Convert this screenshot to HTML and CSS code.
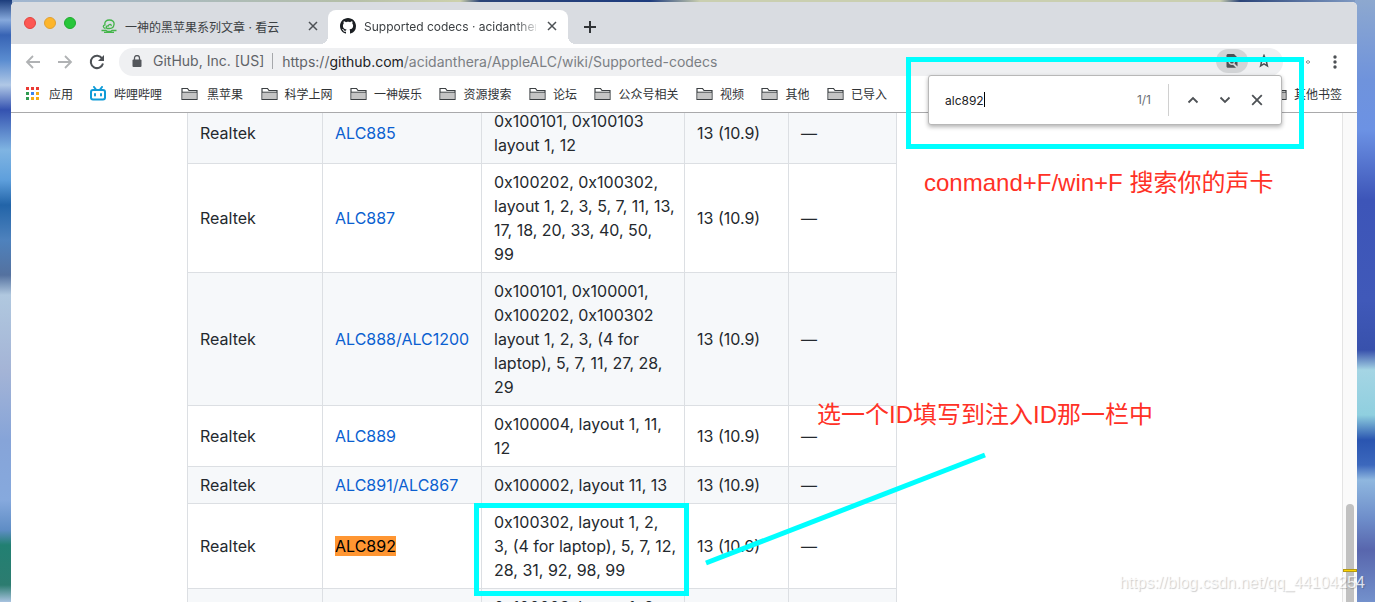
FILE: index.html
```html
<!DOCTYPE html>
<html lang="zh-CN">
<head>
<meta charset="utf-8">
<title>Supported codecs · acidanthera/AppleALC Wiki</title>
<link rel="stylesheet" href="styles.css">
</head>
<body>
<svg width="0" height="0" class="defs" aria-hidden="true">
  <symbol id="folder" viewBox="0 0 17 14">
    <path d="M1 12.5V1.5H6.5L8 3.5H16V12.5Z" fill="#fff" stroke="#3c4043" stroke-width="1.2"/>
    <path d="M1.6 5.5H15.4V12H1.6Z" fill="#c4c4c4"/>
    <path d="M1 5.2H16" stroke="#3c4043"/>
  </symbol>
  <symbol id="close" viewBox="0 0 10 10">
    <path d="M1 1L9 9M9 1L1 9" stroke="#4d5155" stroke-width="1.5" fill="none"/>
  </symbol>
</svg>
<div class="window">
  <header class="tabs">
    <div class="lights"><button class="light red" aria-label="关闭"></button><button class="light yellow" aria-label="最小化"></button><button class="light green" aria-label="缩放"></button></div>
    <div class="tab">
      <svg width="16" height="14" viewBox="0 0 16 14" fill="none" stroke="#43b549" stroke-width="1.3"><path d="M4.500 9.500C2 9.300 1.500 6.300 4 5.800C3.200 2.800 5.500 1 8.300 1C11.500 1 13.500 3 13 5.500C12.700 8 10.500 9.500 8.500 9.500H6C4.500 8.500 5.500 6.300 7.300 7C8 4.500 10.800 5 10 7M0.500 11.500H5L6.500 12.500H9.500L11 11.500H15.500M3 13.400H13"/></svg>
      <span class="tab-title">一神的黑苹果系列文章 · 看云</span>
      <button class="icon-button" aria-label="关闭标签页"><svg width="10" height="10"><use href="#close"/></svg></button>
    </div>
    <div class="tab active">
      <svg width="16" height="16" viewBox="0 0 16 16" fill="#1b1f23"><path d="M8 0C3.580 0 0 3.580 0 8c0 3.540 2.290 6.530 5.470 7.590.4.070.550-.170.550-.380 0-.190-.010-.820-.010-1.490-2.010.370-2.530-.490-2.690-.940-.090-.230-.480-.940-.820-1.130-.280-.150-.680-.520-.010-.530.630-.010 1.080.580 1.230.820.720 1.210 1.870.870 2.330.660.070-.520.280-.870.510-1.070-1.780-.2-3.640-.890-3.640-3.950 0-.870.310-1.590.820-2.150-.080-.2-.360-1.020.080-2.120 0 0 .670-.210 2.200.820.640-.180 1.320-.270 2-.270s1.360.090 2 .270c1.530-1.040 2.200-.820 2.200-.820.440 1.100.160 1.920.080 2.120.510.560.820 1.270.820 2.150 0 3.070-1.870 3.750-3.650 3.950.290.250.540.730.540 1.480 0 1.070-.010 1.930-.010 2.200 0 .210.150.460.550.380A8.010 8.010 0 0 0 16 8c0-4.420-3.580-8-8-8z"/></svg>
      <span class="tab-title">Supported codecs · acidanthera</span>
      <button class="icon-button" aria-label="关闭标签页"><svg width="10" height="10"><use href="#close"/></svg></button>
    </div>
    <button class="icon-button new-tab" aria-label="新标签页"><svg width="12" height="12" viewBox="0 0 12 12"><path d="M6 0V12M0 6H12" stroke="#303336" stroke-width="2"/></svg></button>
  </header>
  <div class="toolbar">
    <button class="icon-button" aria-label="后退"><svg width="16" height="14" viewBox="0 0 16 14" fill="none" stroke="#b0b2b4" stroke-width="1.8"><path d="M15 7H2M8 1L2 7L8 13"/></svg></button>
    <button class="icon-button" aria-label="前进"><svg width="16" height="14" viewBox="0 0 16 14" fill="none" stroke="#b0b2b4" stroke-width="1.8"><path d="M1 7H14M8 1L14 7L8 13"/></svg></button>
    <button class="icon-button" aria-label="重新加载"><svg width="16" height="16" viewBox="0 0 16 16"><path d="M13.200 4.500A6.200 6.200 0 1 0 14 9.500" fill="none" stroke="#4d5155" stroke-width="2"/><path d="M15 1V7H9Z" fill="#4d5155"/></svg></button>
    <div class="omnibox">
      <svg width="10" height="12" viewBox="0 0 10 12"><rect x="0.500" y="4.500" width="9" height="7.500" rx="1" fill="#54575c"/><path d="M2.500 5V3A2.500 2.500 0 0 1 7.500 3V5" fill="none" stroke="#54575c" stroke-width="1.300"/></svg>
      <span class="origin">GitHub, Inc. [US]</span>
      <span class="url"><span class="scheme">https://</span><b>github.com</b>/acidanthera/AppleALC/wiki/Supported-codecs</span>
      <button class="icon-button find-chip" aria-label="在页面中查找"><svg width="12" height="14" viewBox="0 0 12 14"><path d="M1.500 0H8L11.500 3.500V12.500L8.500 9.500A3.300 3.300 0 1 0 7 10.800L10 13.800H1.500A1.300 1.300 0 0 1 0.500 12.500V1Z" fill="#4d5155"/><circle cx="5.900" cy="7.700" r="1.900" fill="#4d5155"/></svg></button>
      <button class="icon-button" aria-label="收藏"><svg width="14" height="14" viewBox="0 0 14 14"><path d="M7 1.500L8.500 5.200L12.500 5.500L9.500 8.100L10.400 12L7 9.900L3.600 12L4.500 8.100L1.500 5.500L5.500 5.200Z" fill="none" stroke="#4d5155" stroke-width="1.500"/></svg></button>
    </div>
    <svg class="extension" width="14" height="8" viewBox="0 0 14 8" fill="none" stroke="#8b8b8b"><path d="M1 4H3"/><path d="M7 4L9 2.500L11 4L9 5.500Z"/></svg>
    <button class="icon-button menu" aria-label="菜单"><svg width="4" height="14" viewBox="0 0 4 14" fill="#4d5155"><circle cx="2" cy="2" r="1.700"/><circle cx="2" cy="7" r="1.700"/><circle cx="2" cy="12" r="1.700"/></svg></button>
  </div>
  <nav class="bookmarks">
    <a class="bookmark" href="#"><svg width="14" height="14" viewBox="0 0 14 14"><path d="M0 0h3v3H0zM5 0h3v3H5zM10 0h3v3h-3z" fill="#ea3a33"/><path d="M0 5h3v3H0zM0 10h3v3H0z" fill="#2f9b50"/><path d="M5 5h3v3H5z" fill="#3b83f0"/><path d="M5 10h3v3H5zM10 5h3v3h-3zM10 10h3v3h-3z" fill="#f5aa16"/></svg><span>应用</span></a>
    <a class="bookmark bili" href="#"><svg width="16" height="15" viewBox="0 0 16 15" fill="none" stroke="#0f9bd7" stroke-width="2" stroke-linecap="round"><rect x="1" y="4" width="14" height="9.500" rx="2"/><path d="M4 1L6 3.500M12 1L10 3.500M5 8V9.500M11 8V9.500"/></svg><span>哔哩哔哩</span></a>
    <div class="folders">
      <a class="bookmark" href="#"><svg width="17" height="14"><use href="#folder"/></svg><span>黑苹果</span></a>
      <a class="bookmark" href="#"><svg width="17" height="14"><use href="#folder"/></svg><span>科学上网</span></a>
      <a class="bookmark" href="#"><svg width="17" height="14"><use href="#folder"/></svg><span>一神娱乐</span></a>
      <a class="bookmark" href="#"><svg width="17" height="14"><use href="#folder"/></svg><span>资源搜索</span></a>
      <a class="bookmark" href="#"><svg width="17" height="14"><use href="#folder"/></svg><span>论坛</span></a>
      <a class="bookmark" href="#"><svg width="17" height="14"><use href="#folder"/></svg><span>公众号相关</span></a>
      <a class="bookmark" href="#"><svg width="17" height="14"><use href="#folder"/></svg><span>视频</span></a>
      <a class="bookmark" href="#"><svg width="17" height="14"><use href="#folder"/></svg><span>其他</span></a>
      <a class="bookmark" href="#"><svg width="17" height="14"><use href="#folder"/></svg><span>已导入</span></a>
    </div>
    <a class="bookmark others" href="#"><svg width="17" height="14"><use href="#folder"/></svg><span>其他书签</span></a>
  </nav>
  <div class="viewport">
    <main class="page">
      <table class="codecs">
        <colgroup><col class="c-vendor"><col class="c-codec"><col class="c-layout"><col class="c-kernel"><col class="c-max"></colgroup>
        <tbody>
          <tr><td>Realtek</td><td><a href="#">ALC885</a></td><td>0x100101, 0x100103<br>layout 1, 12</td><td>13 (10.9)</td><td>—</td></tr>
          <tr><td>Realtek</td><td><a href="#">ALC887</a></td><td>0x100202, 0x100302,<br>layout 1, 2, 3, 5, 7, 11, 13,<br>17, 18, 20, 33, 40, 50,<br>99</td><td>13 (10.9)</td><td>—</td></tr>
          <tr><td>Realtek</td><td><a href="#">ALC888/ALC1200</a></td><td>0x100101, 0x100001,<br>0x100202, 0x100302<br>layout 1, 2, 3, (4 for<br>laptop), 5, 7, 11, 27, 28,<br>29</td><td>13 (10.9)</td><td>—</td></tr>
          <tr><td>Realtek</td><td><a href="#">ALC889</a></td><td>0x100004, layout 1, 11,<br>12</td><td>13 (10.9)</td><td>—</td></tr>
          <tr><td>Realtek</td><td><a href="#">ALC891/ALC867</a></td><td>0x100002, layout 11, 13</td><td>13 (10.9)</td><td>—</td></tr>
          <tr><td>Realtek</td><td><a href="#"><mark>ALC892</mark></a></td><td>0x100302, layout 1, 2,<br>3, (4 for laptop), 5, 7, 12,<br>28, 31, 92, 98, 99</td><td>13 (10.9)</td><td>—</td></tr>
          <tr><td>&nbsp;</td><td></td><td>0x100003, layout 1, 2,<br>&nbsp;</td><td></td><td></td></tr>
        </tbody>
      </table>
    </main>
    <div class="scrollbar"><div class="thumb"></div><div class="match-tick"></div></div>
  </div>
  <form class="find-bar">
    <input class="find-input" type="text" value="alc892" aria-label="查找"><i class="caret"></i>
    <span class="count">1/1</span>
    <button type="button" class="icon-button" aria-label="上一个"><svg width="12" height="8" viewBox="0 0 12 8"><path d="M1.500 6.500L6 2L10.500 6.500" fill="none" stroke="#4d5155" stroke-width="1.800"/></svg></button>
    <button type="button" class="icon-button" aria-label="下一个"><svg width="12" height="8" viewBox="0 0 12 8"><path d="M1.500 1.500L6 6L10.500 1.500" fill="none" stroke="#4d5155" stroke-width="1.800"/></svg></button>
    <button type="button" class="icon-button" aria-label="关闭"><svg width="12" height="12"><use href="#close"/></svg></button>
  </form>
</div>
<div class="box box-find"></div>
<div class="box box-layout"></div>
<svg class="pointer" width="290" height="120" viewBox="0 0 290 120"><path d="M6 114L285 6" stroke="#0ff" stroke-width="5"/></svg>
<p class="note note-find">conmand+F/win+F 搜索你的声卡</p>
<p class="note note-layout">选一个ID填写到注入ID那一栏中</p>
<p class="watermark">https://blog.csdn.net/qq_44104254</p>
</body>
</html>
```

FILE: styles.css
```css
* { box-sizing: border-box; }

body {
  margin: 0;
  height: 100vh;
  padding: 2px 18px 0 11px;
  position: relative;
  overflow: hidden;
  font-family: Inter, "Noto Sans CJK SC", sans-serif;
  color: #24292e;
  background:
    linear-gradient(#8da8cf 0, #6f93dc 80px, #6c92e4 130px, #3d55b8 200px, #4059b9 300px, #3851ac 350px, #a5d5e4 370px, #8fcfdf 415px, #2a55b0 440px, #3c68bd 465px, #8fb7df 480px, #6d8cc9 520px, #5866ad 550px, #7391cc 602px) right / 20px 100% no-repeat,
    linear-gradient(#1c3d7c 0, #86a9dc 20px, #3763b4 35px, #5a8cd0 60px, #b0c8e6 85px, #3452b0 110px, #7fb4e2 150px, #5e9fdc 180px, #2264a8 205px, #4e82bd 240px, #54719f 275px, #b0c8df 295px, #a4b4d6 370px, #86a4d8 440px, #86a9dd 500px, #5f8dc5 530px, #228072 545px, #2c7c70 585px, #a9c3e0 602px) left / 12px 100% no-repeat,
    linear-gradient(90deg, #9fb5d2 0, #b5bfa8 350px, #cdd1ac 460px, #2b4478 480px, #1e3c7e 650px, #cacfb0 700px, #cacfb0 1220px, #2b4478 1240px, #8da8cf 1375px);
}

.defs, .box, .pointer, .note, .watermark { position: absolute; }

button, input { font: inherit; }
a { text-decoration: none; color: inherit; }
svg { flex: none; }

.window {
  height: 100%;
  position: relative;
  display: flex;
  flex-direction: column;
  border-radius: 5px 5px 0 0;
  overflow: hidden;
  background: #fff;
}

.icon-button {
  display: flex;
  align-items: center;
  justify-content: center;
  flex: none;
  width: 16px;
  height: 24px;
  padding: 0;
  border: 0;
  background: none;
}

/* Tab strip */
.tabs {
  display: flex;
  height: 42px;
  flex: none;
  padding-left: 13px;
  background: #d9dce1;
}
.lights { display: flex; gap: 8px; padding-top: 15px; width: 65px; }
.light { width: 12px; height: 12px; border-radius: 50%; padding: 0; border: 1px solid; }
.red { background: #fc5753; border-color: #e2443f; }
.yellow { background: #fdb52b; border-color: #e0a033; }
.green { background: #27c63a; border-color: #1fab2e; }
.tab {
  display: flex;
  align-items: center;
  gap: 8px;
  width: 240px;
  margin-top: 8px;
  padding: 0 8px 2px 12px;
  font-size: 12px;
  color: #3c4043;
}
.tab-title {
  flex: 1;
  overflow: hidden;
  white-space: nowrap;
}
.active {
  position: relative;
  margin-left: -1px;
  background: #fff;
  border-radius: 8px 8px 0 0;
}
.active .tab-title { mask-image: linear-gradient(90deg, #000 150px, transparent 178px); }
.active::before, .active::after {
  content: "";
  position: absolute;
  bottom: 0;
  width: 8px;
  height: 8px;
}
.active::before { left: -8px; background: radial-gradient(circle at 0 0, transparent 8px, #fff 8px); }
.active::after { right: -8px; background: radial-gradient(circle at 100% 0, transparent 8px, #fff 8px); }
.new-tab { margin: 13px 0 0 14px; }

/* Toolbar */
.toolbar {
  display: flex;
  align-items: center;
  gap: 16px;
  height: 36px;
  flex: none;
  padding: 0 16px 0 14px;
}
.omnibox {
  flex: 1;
  display: flex;
  align-items: center;
  height: 28px;
  padding: 0 11px 2px 13px;
  margin-left: -2px;
  border-radius: 14px;
  background: #eff0f2;
  font-size: 14px;
  white-space: nowrap;
}
.origin {
  margin-left: 11px;
  padding-right: 8px;
  border-right: 1px solid #a6a8ab;
  line-height: 16px;
  color: #5f6368;
}
.url { flex: 1; margin-left: 9px; color: #7b7f84; }
.scheme { color: #5f6368; }
.url b { font-weight: 400; color: #202124; }
.find-chip { width: 32px; border-radius: 12px; background: #d2d4d6; margin-right: 8px; }
.menu { width: 12px; }

/* Bookmarks bar */
.bookmarks {
  display: flex;
  align-items: center;
  height: 33px;
  flex: none;
  padding: 0 15px 5px;
  border-bottom: 1px solid #a9a9ab;
  font-size: 12px;
  color: #303336;
}
.bookmark { display: flex; align-items: center; gap: 7px; white-space: nowrap; }
.bookmark:first-child { gap: 9px; }
.bili { margin-left: 17px; gap: 8px; }
.folders {
  display: flex;
  justify-content: space-between;
  width: 706px;
  margin-left: 19px;
}
.others { margin-left: auto; }

/* Page */
.viewport { flex: 1; min-height: 0; display: flex; }
.page { flex: 1; overflow: hidden; padding-left: 176px; }
.codecs {
  width: 710px;
  margin-top: -11px;
  table-layout: fixed;
  border-collapse: collapse;
  font-size: 16px;
  line-height: 24px;
}
.c-vendor { width: 135px; }
.c-codec { width: 159px; }
.c-layout { width: 203px; }
.c-kernel { width: 104px; }
.codecs td { padding: 6px 12px; border: 1px solid #dcdfe3; white-space: nowrap; }
.codecs tr:nth-child(odd) { background: #f6f8fa; }
.codecs a { color: #0b5fd0; }
mark { background: #ff9632; color: #000; }

.scrollbar {
  position: relative;
  width: 15px;
  border-left: 1px solid #e4e4e4;
  background: #fafafa;
}
.thumb {
  position: absolute;
  top: 391px;
  bottom: -10px;
  left: 3px;
  width: 8px;
  border-radius: 4px;
  background: #c1c1c1;
}
.match-tick {
  position: absolute;
  top: 456px;
  left: 0;
  right: 0;
  height: 3px;
  background: #ffd500;
  border: 1px solid #b59a13;
}

/* Find bar */
.find-bar {
  position: absolute;
  top: 73px;
  right: 75px;
  display: flex;
  align-items: center;
  gap: 16px;
  width: 354px;
  height: 50px;
  padding: 0 16px;
  background: #fff;
  border: 1px solid #b8b8b8;
  border-radius: 3px;
  box-shadow: 0 2px 4px rgba(0, 0, 0, .3);
  font-size: 12px;
}
.find-input { flex: 1; min-width: 0; padding: 0; border: 0; outline: 0; color: #202124; }
.caret { position: absolute; left: 55px; top: 16px; width: 1px; height: 15px; background: #000; }
.count {
  padding-right: 17px;
  line-height: 32px;
  border-right: 1px solid #d0d0d0;
  color: #6b6f73;
}

/* Annotations */
.box { border: 5px solid #0ff; }
.box-find { left: 906px; top: 57px; width: 398px; height: 92px; }
.box-layout { left: 474px; top: 503px; width: 215px; height: 93px; }
.pointer { left: 700px; top: 449px; }
.note {
  margin: 0;
  font: 24px/32px "Liberation Sans", "Noto Sans CJK SC", sans-serif;
  color: #ff3126;
  white-space: nowrap;
}
.note-find { left: 924px; top: 167px; }
.note-layout { left: 817px; top: 399px; }
.watermark {
  right: 10px;
  bottom: 9px;
  margin: 0;
  font: 16px/20px "Liberation Sans", sans-serif;
  color: rgba(255, 255, 255, .8);
  text-shadow: 1px 1px 1px rgba(0, 0, 0, .2);
}
```
